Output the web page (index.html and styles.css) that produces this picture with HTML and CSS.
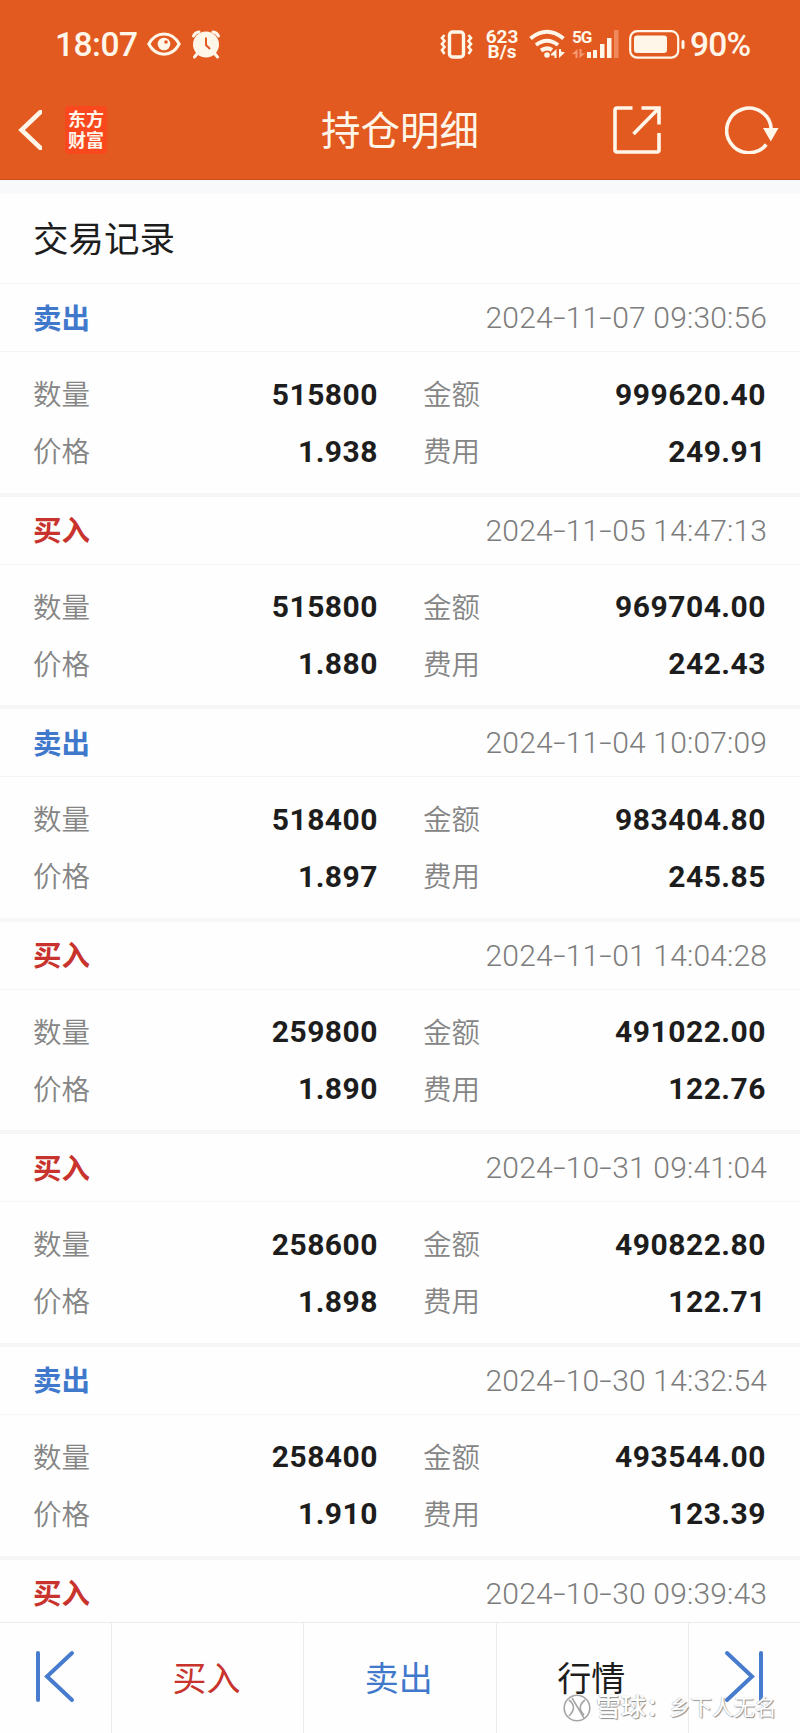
FILE: index.html
```html
<!DOCTYPE html>
<html lang="zh-CN">
<head>
<meta charset="utf-8">
<title>持仓明细</title>
<link rel="stylesheet" href="styles.css">
</head>
<body>
<div class="app">
  <header class="header">
    <div class="status">
      <span class="clock">18:07</span>
      <svg class="eye" width="34" height="24" viewBox="0 0 34 24"><path d="M1.8 12C9 -1.5 25 -1.5 32.2 12C25 25.500 9 25.500 1.800 12Z" fill="none" stroke="#fff6ea" stroke-width="3"/><circle cx="17" cy="12" r="6.300" fill="#fff6ea"/><circle cx="19" cy="10" r="1.800" fill="#e25a20"/></svg>
      <svg class="alarm" width="30" height="29" viewBox="0 0 30 29"><g stroke="#fff6ea" stroke-width="3" stroke-linecap="round"><path d="M2.500 6Q4 2.500 8 2M27.500 6Q26 2.500 22 2" fill="none"/><path d="M6 24L3.500 27M24 24L26.500 27"/></g><circle cx="15" cy="14.500" r="13" fill="#fff6ea"/><path d="M15 7.500V15L19 19" fill="none" stroke="#e25a20" stroke-width="2"/></svg>
      <span class="gap"></span>
      <svg class="vibrate" width="33" height="29" viewBox="0 0 33 29" fill="none" stroke="#fff6ea"><rect x="9.500" y="2" width="14" height="25" rx="3" stroke-width="3.400"/><path d="M4.500 5L2 8L4.500 11L2 14L4.500 17L2 20L4.500 24M28.500 5L31 8L28.500 11L31 14L28.500 17L31 20L28.500 24" stroke-width="2.600"/></svg>
      <span class="rate"><span>623</span><span>B/s</span></span>
      <svg class="wifi" width="36" height="30" viewBox="0 0 36 30" fill="none" stroke="#fff6ea" stroke-width="4"><path d="M1.500 9.500Q18 -4 34.500 9.500M7 16Q18 7.500 29 16M12 21.500Q18 17.500 23 21"/><circle cx="18" cy="26" r="2.800" fill="#fff6ea" stroke="none"/><path d="M22 25L27.500 20V29H25.500V26.500H22ZM36 23.500L30 29V20H32V22.500Z" fill="#fff6ea" stroke="none"/></svg>
      <span class="signal">
        <span class="fiveg">5G</span>
        <svg width="48" height="30" viewBox="0 0 48 30"><path d="M0 25L5.500 20V29H3.500V25ZM13 24.500L7.500 29V20H9.500V24.500Z" fill="#f59a74"/><path d="M15 23h4v6h-4zM21 21h4v8h-4zM28 15h4.500v14h-4.500zM35 9h4.500v20h-4.500z" fill="#fff6ea"/><path d="M42 1h4.500v28h-4.500z" fill="#f08a5c"/></svg>
      </span>
      <svg class="battery" width="56" height="29" viewBox="0 0 56 29"><rect x="1.200" y="1.200" width="48" height="26.500" rx="7" fill="none" stroke="#fff6ea" stroke-width="2.200"/><rect x="5" y="5.500" width="33" height="17.500" rx="3" fill="#fff6ea"/><rect x="52.500" y="10" width="3" height="9" rx="1.500" fill="#fff6ea"/></svg>
      <span class="percent">90%</span>
    </div>
    <nav class="nav">
      <svg class="back" width="24" height="40" viewBox="0 0 24 40"><path d="M22.500 2L3.500 20L22.500 38" fill="none" stroke="#fff6ea" stroke-width="4.500" stroke-linecap="round"/></svg>
      <span class="brand"><span>东方</span><span>财富</span></span>
      <h1 class="nav-title">持仓明细</h1>
      <svg class="share" width="48" height="48" viewBox="0 0 48 48" fill="none" stroke="#fff6ea" stroke-width="3.600"><path d="M19.500 2H4Q2 2 2 4V44Q2 46 4 46H44Q46 46 46 44V27M28.500 2H46V18.500M45 3L20.500 28"/></svg>
      <svg class="refresh" width="54" height="48" viewBox="0 0 54 48"><path d="M41.300 38.500A22.300 22.300 0 1 1 46.300 24" fill="none" stroke="#fff6ea" stroke-width="3.600"/><path d="M38 22H53.500L45.800 35.500Z" fill="#fff6ea"/></svg>
    </nav>
  </header>
  <main class="content">
    <h2 class="section-title">交易记录</h2>
    <div class="records" id="records"></div>
  </main>
  <footer class="footer">
    <div class="cell edge"><svg width="40" height="54" viewBox="0 0 40 54"><path d="M3 3V50M37 3L12 26.500L37 50" class="step"/></svg></div>
    <div class="cell buy">买入</div>
    <div class="cell sell">卖出</div>
    <div class="cell">行情</div>
    <div class="cell edge"><svg width="40" height="54" viewBox="0 0 40 54"><path d="M37 3V50M3 3L28 26.500L3 50" class="step"/></svg></div>
    <div class="watermark">
      <svg width="28" height="28" viewBox="0 0 28 28" fill="none" stroke="#a5a5a5" stroke-width="1.600"><circle cx="14" cy="14" r="12.800" fill="#fff" fill-opacity="0.600"/><path d="M6 6Q15 13 6 22M9 4L21 24M22 6Q13 13 21 21"/></svg>
      <span class="wm-brand">雪球：</span><span class="wm-user">乡下人无名</span>
    </div>
  </footer>
</div>
<script src="app.js"></script>
</body>
</html>
```

FILE: styles.css
```css
* { box-sizing: border-box; }
body { margin: 0; background: #fefefe; font-family: Roboto, "Noto Sans CJK SC", sans-serif; color: #1d1d1d; }
.app { width: 800px; height: 1733px; overflow: hidden; display: flex; flex-direction: column; }
.header { height: 180px; flex: none; background: #e25a20; color: #fff6ea; border-bottom: 1px solid #c94f1c; }
.status { height: 88px; padding: 0 49px 0 55px; display: flex; align-items: center; }
.clock, .percent { padding-top: 2px; font-size: 33.500px; font-weight: 500; line-height: 40px; white-space: nowrap; letter-spacing: -0.500px; }
.clock { width: 92px; }
.alarm { margin-left: 10px; }
.gap { flex: 1; }
.rate { display: flex; flex-direction: column; align-items: center; width: 34px; margin: 0 10px 0 12px; font-size: 19px; line-height: 15.500px; font-weight: 700; }
.signal { margin-left: 7px; width: 48px; height: 30px; display: grid; }
.signal > * { grid-area: 1 / 1; }
.fiveg { width: 20px; font-size: 17px; line-height: 16px; font-weight: 700; letter-spacing: -1px; }
.battery { margin-left: 9px; }
.percent { width: 61px; margin-left: 5px; letter-spacing: -0.800px; }
.nav { height: 84px; padding: 0 21px 0 18px; display: flex; align-items: center; }
.brand { width: 42px; height: 48px; margin-left: 23px; padding-bottom: 2px; background: #f9481e; border-radius: 4px; display: flex; flex-direction: column; align-items: center; justify-content: center; font: 700 18px/21px "Noto Sans CJK SC", sans-serif; }
.nav-title { margin: 0 0 0 214px; padding-top: 4px; width: 160px; font-size: 39.500px; line-height: 60px; font-weight: 400; white-space: nowrap; }
.share { margin-left: 132px; }
.refresh { margin-left: auto; }
.content { flex: 1; min-height: 0; overflow: hidden; border-top: 14px solid #f8f9fb; }
.section-title { margin: 0; height: 90px; padding: 3px 33px 0; border-bottom: 1px solid #f5f5f5; font-size: 35.500px; font-weight: 400; line-height: 87px; }
.record { height: 212.600px; border-bottom: 4px solid #f6f6f7; }
.record-head { height: 68px; padding: 0 33px; border-bottom: 1px solid #f5f5f5; display: flex; justify-content: space-between; align-items: center; }
.side { padding-bottom: 3px; font-size: 28.500px; font-weight: 700; }
.buy { color: #c8332d; }
.sell { color: #4078cc; }
.time { font-size: 30px; font-weight: 300; color: #7c7c7c; white-space: nowrap; letter-spacing: 0.150px; }
.dash { display: inline-block; width: 13px; text-align: center; transform: scaleX(1.500); }
.figures { padding: 13px 33px 0; display: grid; grid-template-columns: 345px 343px; column-gap: 45px; grid-auto-rows: 57px; }
.figure { display: flex; justify-content: space-between; align-items: center; }
.label { padding-bottom: 2px; font-size: 28.500px; font-weight: 350; color: #858585; }
.value { padding-top: 1px; font-size: 30px; font-weight: 700; letter-spacing: 0.500px; }
.footer { position: relative; flex: none; height: 111px; border-top: 1px solid #ebebeb; background: #fefefe; display: grid; grid-template-columns: 111px 192px 192.500px 192.500px 112px; }
.cell { padding: 0 2px 3px 0; border-left: 1px solid #ececec; display: flex; align-items: center; justify-content: center; font-size: 34px; }
.edge:first-child { border-left: 0; }
.step { fill: none; stroke: #477bcd; stroke-width: 4; stroke-linecap: round; }
.watermark { position: absolute; left: 563px; top: 71px; display: flex; align-items: center; line-height: 28px; color: #fff; text-shadow: 1px 1px 1px #8c8c8c, -0.5px -0.5px 1px #b5b5b5; white-space: nowrap; }
.wm-brand { width: 73px; margin-left: 5px; font-size: 25px; font-weight: 500; }
.wm-user { font-size: 21.500px; }
```

FILE: app.js
```js
const records = [
  ["sell", "2024-11-07 09:30:56", "515800", "999620.40", "1.938", "249.91"],
  ["buy", "2024-11-05 14:47:13", "515800", "969704.00", "1.880", "242.43"],
  ["sell", "2024-11-04 10:07:09", "518400", "983404.80", "1.897", "245.85"],
  ["buy", "2024-11-01 14:04:28", "259800", "491022.00", "1.890", "122.76"],
  ["buy", "2024-10-31 09:41:04", "258600", "490822.80", "1.898", "122.71"],
  ["sell", "2024-10-30 14:32:54", "258400", "493544.00", "1.910", "123.39"],
  ["buy", "2024-10-30 09:39:43"]
];
const labels = ["数量", "金额", "价格", "费用"];
const formatTime = (time) => time.replace(/-/g, '<span class="dash">-</span>');
document.getElementById("records").innerHTML = records.map(([side, time, ...values]) => `
  <section class="record">
    <div class="record-head"><span class="side ${side}">${side === "buy" ? "买入" : "卖出"}</span><time class="time">${formatTime(time)}</time></div>
    <div class="figures">${values.map((v, i) => `<div class="figure"><span class="label">${labels[i]}</span><span class="value">${v}</span></div>`).join("")}</div>
  </section>`).join("");
```
